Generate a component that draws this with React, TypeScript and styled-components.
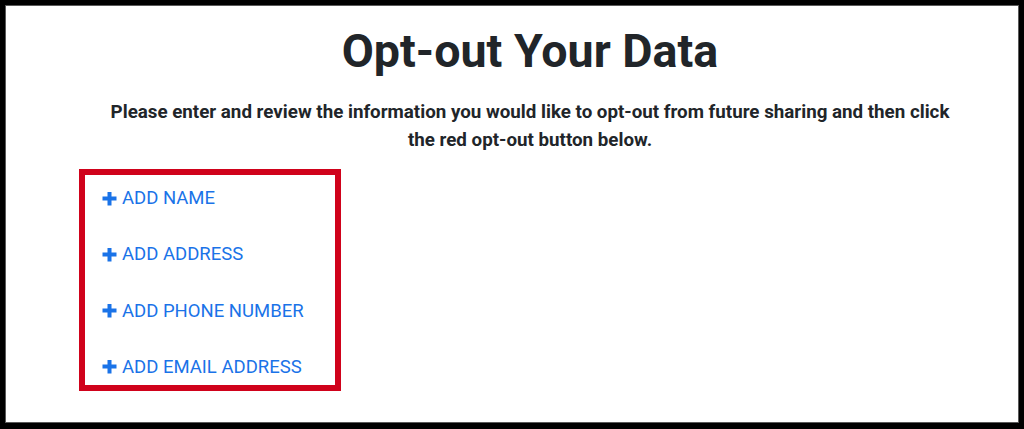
import styled, { createGlobalStyle } from "styled-components";

const GlobalStyle = createGlobalStyle`
  html, body {
    margin: 0;
    padding: 0;
    background: #000;
  }
  body {
    font-family: Roboto, "Liberation Sans", Arial, sans-serif;
  }
`;

const Frame = styled.div`
  box-sizing: border-box;
  height: 418px;
  margin: 5px 5px 6px 5px;
  background: #fff;
  border: 1px solid #5a5a5a;
  overflow: hidden;
`;

const Content = styled.main`
  display: flex;
  flex-direction: column;
  padding: 18.2px 0 0 36px;
`;

const Title = styled.h1`
  margin: 0;
  font-size: 46.6px;
  line-height: 1.2;
  font-weight: 700;
  color: #212529;
  text-align: center;
`;

const Intro = styled.p`
  margin: 18.4px auto 0;
  max-width: 856px;
  font-size: 18.75px;
  line-height: 28px;
  font-weight: 700;
  color: #212529;
  text-align: center;
`;

const AddBox = styled.section`
  box-sizing: border-box;
  width: 262px;
  margin: 14.6px 0 0 37px;
  padding: 13px 10px 8.1px 17px;
  border: 6px solid #d0021b;
  display: flex;
  flex-direction: column;
  gap: 36.3px;
`;

const AddLink = styled.a`
  display: flex;
  align-items: center;
  gap: 5px;
  font-size: 18.5px;
  line-height: 20px;
  color: #1a73e8;
  text-decoration: none;
  text-transform: uppercase;
  white-space: nowrap;
  cursor: pointer;
`;

const PlusIcon = () => (
  <svg width="15" height="15" viewBox="0 0 15 15" aria-hidden="true">
    <path d="M7.5 1v13.5M0.5 7.5h14" stroke="#1a73e8" strokeWidth="4" />
  </svg>
);

const fields = ["Add Name", "Add Address", "Add Phone Number", "Add Email Address"];

export default function App() {
  return (
    <>
      <GlobalStyle />
      <Frame>
        <Content>
          <Title>Opt-out Your Data</Title>
          <Intro>
            Please enter and review the information you would like to opt-out from future sharing and then click
            the red opt-out button below.
          </Intro>
          <AddBox>
            {fields.map((f) => (
              <AddLink key={f}>
                <PlusIcon />
                {f}
              </AddLink>
            ))}
          </AddBox>
        </Content>
      </Frame>
    </>
  );
}
